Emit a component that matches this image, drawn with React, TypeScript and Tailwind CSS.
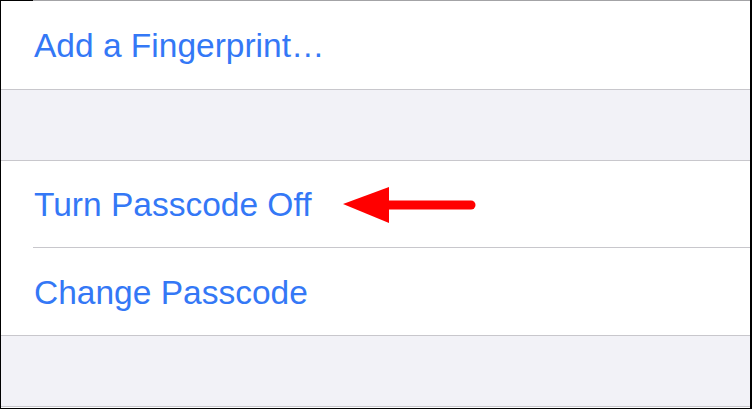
const font = { fontFamily: '"Liberation Sans", Arial, sans-serif' };

function Row({ label, h, children }: { label: string; h: string; children?: React.ReactNode }) {
  return (
    <div className={`relative flex items-center bg-white pl-[33px] pt-[2px] ${h}`}>
      <span className="text-[33.5px] leading-none text-[#3478f6]">{label}</span>
      {children}
    </div>
  );
}

function Arrow() {
  return (
    <svg
      className="absolute left-[342px] top-[26px]"
      width="134"
      height="37"
      viewBox="0 0 134 37"
    >
      <line x1="40" y1="18" x2="128" y2="18" stroke="#ff0000" strokeWidth="9" strokeLinecap="round" />
      <polygon points="0,17 46,0 46,36" fill="#ff0000" />
    </svg>
  );
}

export default function App() {
  return (
    <div
      className="flex h-[409px] w-[752px] flex-col overflow-hidden border-b border-l border-r-2 border-black bg-white"
      style={font}
    >
      {/* top edge */}
      <div className="flex h-px">
        <div className="w-[32px] bg-black" />
        <div className="flex-1 bg-[#a3a3a6]" />
      </div>
      <Row label="Add a Fingerprint…" h="h-[88px]" />
      <div className="h-px bg-[#c8c7cc]" />
      <div className="h-[70px] bg-[#f2f2f7]" />
      <div className="h-px bg-[#c8c7cc]" />
      <Row label="Turn Passcode Off" h="h-[86px]">
        <Arrow />
      </Row>
      <div className="ml-[32px] h-px bg-[#c8c7cc]" />
      <Row label="Change Passcode" h="h-[87px]" />
      <div className="h-px bg-[#c8c7cc]" />
      <div className="h-[70px] bg-[#f2f2f7]" />
      <div className="h-px bg-[#c8c7cc]" />
      <div className="h-px bg-white" />
    </div>
  );
}
